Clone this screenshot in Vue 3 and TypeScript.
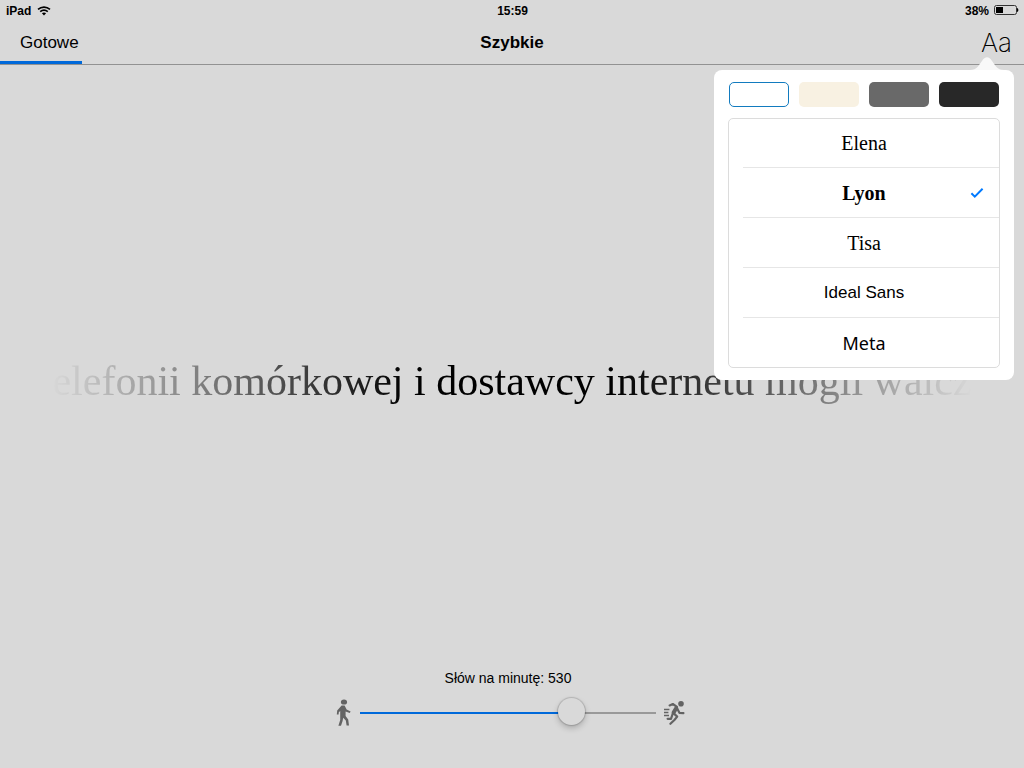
<script setup lang="ts">
import { computed, ref } from 'vue'

interface Theme {
  id: string
  label: string
}

interface Face {
  id: string
  label: string
}

const themes: Theme[] = [
  { id: 'white', label: 'Biały' },
  { id: 'sepia', label: 'Sepia' },
  { id: 'gray', label: 'Szary' },
  { id: 'dark', label: 'Ciemny' },
]

const faces: Face[] = [
  { id: 'elena', label: 'Elena' },
  { id: 'lyon', label: 'Lyon' },
  { id: 'tisa', label: 'Tisa' },
  { id: 'ideal', label: 'Ideal Sans' },
  { id: 'meta', label: 'Meta' },
]

const minSpeed = 60
const maxSpeed = 700

const theme = ref('white')
const face = ref('lyon')
const speed = ref(530)
const progress = ref(8)
const menuOpen = ref(true)

const fill = computed(() => `${((speed.value - minSpeed) / (maxSpeed - minSpeed)) * 100}%`)
</script>

<template>
  <div class="screen">
    <div class="status">
      <div class="status-side">
        <span>iPad</span>
        <svg class="wifi" viewBox="0 0 14 10" aria-hidden="true">
          <path d="M1 3.4C4.5 0.3 9.5 0.3 13 3.4" />
          <path d="M3.2 5.7C5.4 3.8 8.6 3.8 10.8 5.7" />
          <path class="solid" d="M4.9 7.3C6.1 6.3 7.9 6.3 9.1 7.3L7 9.6Z" />
        </svg>
      </div>
      <span>15:59</span>
      <div class="status-side end">
        <span>38%</span>
        <svg class="battery" viewBox="0 0 26 10" aria-hidden="true">
          <rect class="shell" x="1.5" y="0.5" width="22" height="9" rx="2" />
          <rect x="3" y="2" width="7" height="6" />
          <path d="M24 3C25.8 3.2 25.8 6.8 24 7Z" />
        </svg>
      </div>
    </div>

    <header class="bar">
      <div class="bar-side">
        <button class="done" type="button">Gotowe</button>
      </div>
      <h1>Szybkie</h1>
      <div class="bar-side end">
        <button class="type" type="button" aria-label="Wygląd tekstu" @click="menuOpen = !menuOpen">Aa</button>
      </div>
      <div class="progress" :style="{ width: progress + '%' }"></div>
    </header>

    <main class="reader">
      <p>elefonii komórkowej i dostawcy internetu mogli walcz</p>
    </main>

    <footer class="controls">
      <label for="speed">Słów na minutę: {{ speed }}</label>
      <div class="slider-row">
        <svg class="walker" viewBox="0 0 16 28" aria-hidden="true">
          <ellipse cx="8" cy="3" rx="3.1" ry="2.6" />
          <path d="M5.6 6.4H8.6L10.6 10.4L14.6 12.6L13.8 14L9.6 12.4V17L12.2 20.6L13 26.6H10.6L9.8 21.6L7.2 18.8L6.6 22L5 26.8H2.4L4.2 21V12L2.8 13.2L2.6 15.6H0.8L1.2 11.4Z" />
        </svg>
        <input
          id="speed"
          v-model.number="speed"
          type="range"
          :min="minSpeed"
          :max="maxSpeed"
          step="10"
          :style="{ '--fill': fill }"
        />
        <svg class="runner" viewBox="0 0 22 26" aria-hidden="true">
          <circle cx="17" cy="3.8" r="2.8" />
          <path class="limb" d="M5.6 5.4L8.8 4L13 6.8" />
          <path class="torso" d="M12.2 8.2L9.6 12.6" />
          <path class="limb" d="M13.2 8.6L15.4 12.8L19.4 13.2" />
          <path class="limb" d="M10 13.6L13.2 16.6L10.4 20L6.4 23.8" />
          <path class="limb" d="M8.6 14L7 18.8H3.6" />
          <path class="streak" d="M0 9.5H5.4M0 12.5H4.4M0 15.5H5" />
        </svg>
      </div>
    </footer>

    <section v-if="menuOpen" class="popover" aria-label="Wygląd tekstu">
      <svg class="arrow" viewBox="0 0 34 13" aria-hidden="true">
        <path d="M0 13C7 13 9 8 12 4C15 -1 19 -1 22 4C25 8 27 13 34 13Z" />
      </svg>
      <div class="themes">
        <input
          v-for="t in themes"
          :key="t.id"
          v-model="theme"
          type="radio"
          name="theme"
          :value="t.id"
          :aria-label="t.label"
          :class="['swatch', t.id]"
        />
      </div>
      <div class="faces">
        <label v-for="f in faces" :key="f.id" :class="['face', f.id, { chosen: face === f.id }]">
          <input v-model="face" type="radio" name="face" :value="f.id" />
          <span>{{ f.label }}</span>
          <svg v-if="face === f.id" class="tick" viewBox="0 0 14 12" aria-hidden="true">
            <path d="M1.4 6.2L4.8 9.6L12.6 1.8" />
          </svg>
        </label>
      </div>
    </section>
  </div>
</template>

<style>
body {
  margin: 0;
  background: #d9d9d9;
}
</style>

<style scoped>
.screen {
  position: relative;
  display: flex;
  flex-direction: column;
  min-height: 100vh;
  overflow: hidden;
  background: #d9d9d9;
  color: #000;
  font-family: "Liberation Sans", Arial, sans-serif;
}

button {
  padding: 0;
  border: 0;
  background: none;
  color: inherit;
  font-family: inherit;
}

.status {
  display: flex;
  align-items: center;
  height: 20px;
  padding: 2px 5px 0 6px;
  box-sizing: border-box;
  font-size: 12px;
  line-height: 18px;
  font-weight: bold;
}

.status-side,
.bar-side {
  flex: 1;
  display: flex;
  align-items: center;
  gap: 6px;
}

.status-side.end {
  gap: 4px;
}

.end {
  justify-content: flex-end;
}

.wifi {
  width: 14px;
  height: 10px;
  fill: none;
  stroke: #000;
  stroke-width: 1.6;
}

.wifi .solid {
  fill: #000;
  stroke: none;
}

.battery {
  width: 26px;
  height: 10px;
  margin-bottom: 2px;
}

.battery .shell {
  fill: none;
  stroke: #333;
}

.bar {
  position: relative;
  display: flex;
  align-items: center;
  height: 45px;
  padding: 2px 12px 0;
  box-sizing: border-box;
  border-bottom: 1px solid #929292;
}

.bar h1 {
  margin: 0;
  font-size: 17px;
  line-height: 24px;
  font-weight: bold;
}

.done {
  padding-left: 8px;
  font-size: 17px;
  line-height: 24px;
}

.bar .type {
  font-family: Inter, Lato, sans-serif;
  font-size: 26px;
  line-height: 32px;
  font-weight: 200;
}

.progress {
  position: absolute;
  left: 0;
  bottom: 0;
  height: 3px;
  background: #0069da;
}

.reader {
  flex: 1;
  display: flex;
  align-items: center;
  justify-content: center;
  padding-top: 28px;
}

.reader p {
  margin: 0;
  width: 100%;
  text-align: center;
  white-space: nowrap;
  font-family: "Liberation Serif", "Times New Roman", serif;
  font-size: 42px;
  line-height: 56px;
  -webkit-mask-image: linear-gradient(90deg, transparent 5%, #000 40%, #000 60%, transparent 95%);
  mask-image: linear-gradient(90deg, transparent 5%, #000 40%, #000 60%, transparent 95%);
}

.controls {
  display: flex;
  flex-direction: column;
  align-items: center;
  gap: 11px;
  padding: 0 2px 41px 0;
}

.controls label {
  padding-right: 6px;
  font-size: 14px;
  line-height: 20px;
}

.slider-row {
  display: flex;
  align-items: center;
  gap: 8px;
}

.slider-row svg {
  fill: #636363;
}

.walker {
  width: 16px;
  height: 28px;
}

.runner {
  width: 22px;
  height: 26px;
}

.runner path {
  fill: none;
  stroke: #636363;
  stroke-width: 2.2;
  stroke-linecap: round;
  stroke-linejoin: round;
}

.runner .torso {
  stroke-width: 4;
}

.runner .streak {
  stroke-width: 1.3;
  stroke-linecap: butt;
}

#speed {
  appearance: none;
  width: 296px;
  height: 28px;
  margin: 0;
  background: none;
}

#speed::-webkit-slider-runnable-track {
  height: 2px;
  background: linear-gradient(90deg, #0069da var(--fill), #999 var(--fill));
}

#speed::-webkit-slider-thumb {
  appearance: none;
  width: 27px;
  height: 27px;
  margin-top: -14px;
  border-radius: 50%;
  background: #d9d9d9;
  box-shadow: 0 0 1px 1px rgba(0, 0, 0, 0.15), 0 3px 6px rgba(0, 0, 0, 0.22);
}

.popover {
  position: absolute;
  top: 70px;
  right: 10px;
  width: 300px;
  padding: 12px 14px;
  box-sizing: border-box;
  border-radius: 8px;
  background: #fff;
}

.arrow {
  position: absolute;
  right: 10px;
  bottom: 100%;
  width: 34px;
  height: 13px;
  fill: #f8f8f8;
}

.themes {
  display: flex;
  gap: 10px;
  padding: 0 1px;
}

.swatch {
  appearance: none;
  box-sizing: border-box;
  flex: 1 1 0;
  width: 0;
  min-width: 0;
  height: 25px;
  margin: 0;
  border: 1px solid transparent;
  border-radius: 5px;
}

.swatch.white {
  background: #fff;
}

.swatch.sepia {
  background: #f8f1e2;
}

.swatch.gray {
  background: #696969;
}

.swatch.dark {
  background: #282828;
}

.swatch:checked {
  border-color: #127bbf;
}

.faces {
  margin-top: 11px;
  border: 1px solid #dcdcdc;
  border-radius: 5px;
}

.face {
  position: relative;
  display: flex;
  align-items: center;
  justify-content: center;
  height: 49px;
  margin-left: 14px;
  padding-right: 14px;
  border-bottom: 1px solid #e6e6e6;
  font-size: 20px;
  line-height: 28px;
}

.face:first-child {
  height: 48px;
}

.face:last-child {
  border-bottom: 0;
}

.face input {
  position: absolute;
  inset: 0;
  margin: 0;
  opacity: 0;
}

.elena,
.lyon,
.tisa {
  font-family: "Liberation Serif", "Times New Roman", serif;
}

.chosen {
  font-weight: bold;
}

.ideal {
  font-size: 17px;
}

.meta {
  font-family: "Noto Sans", "Open Sans", sans-serif;
  font-size: 18px;
}

.tick {
  position: absolute;
  right: 15px;
  width: 14px;
  height: 12px;
  fill: none;
  stroke: #007aff;
  stroke-width: 2;
}
</style>
